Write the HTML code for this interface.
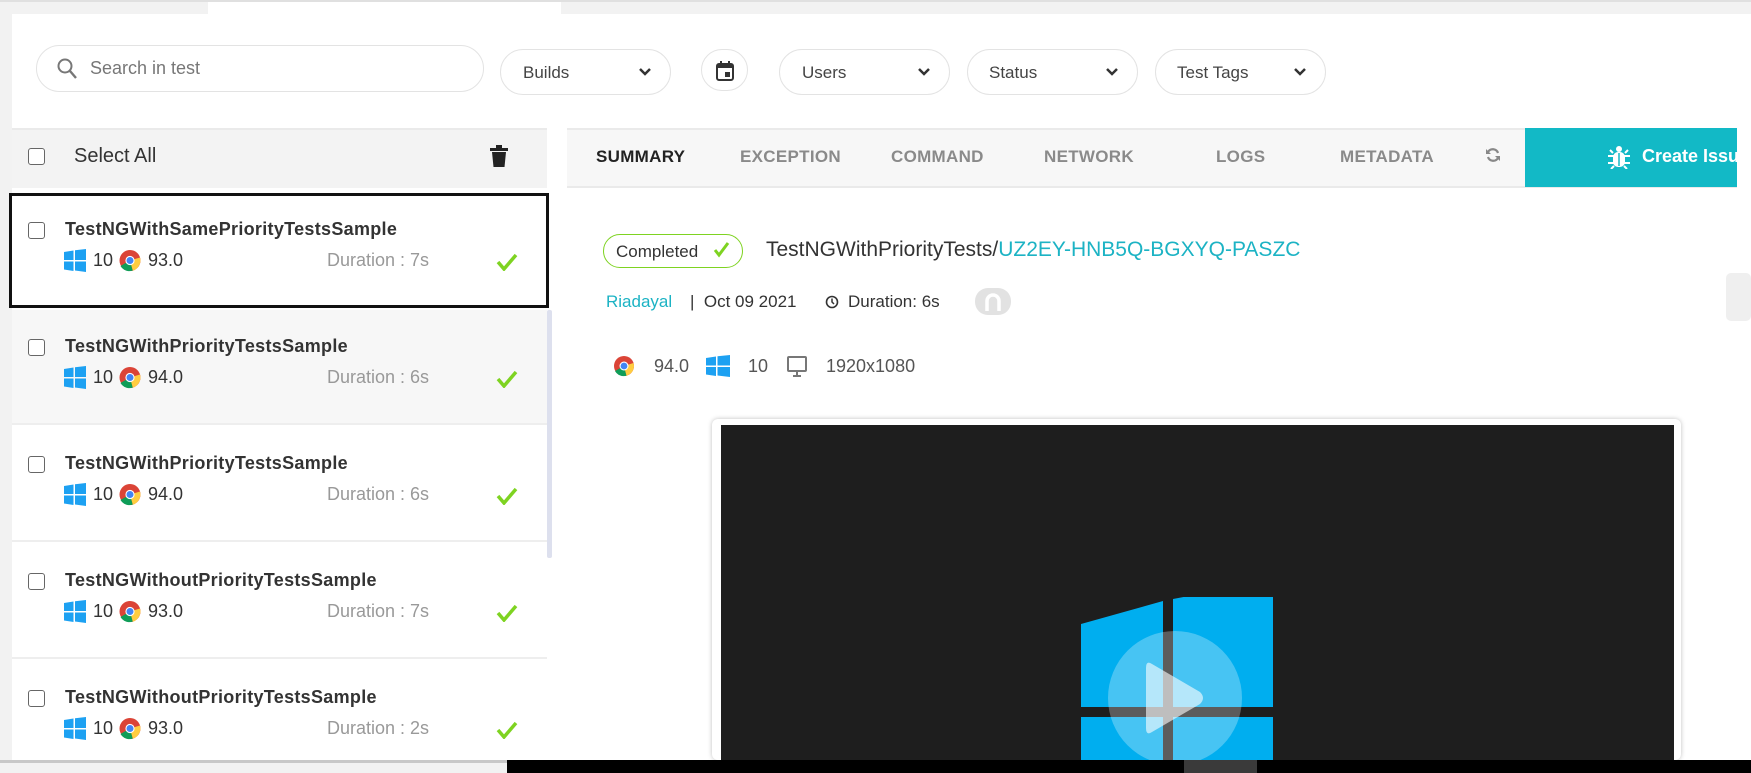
<!DOCTYPE html>
<html><head><meta charset="utf-8"><style>
*{box-sizing:border-box;margin:0;padding:0}
body{width:1751px;height:773px;overflow:hidden;background:#fff;font-family:"Liberation Sans",sans-serif;position:relative;color:#333}
.a{position:absolute}
.pill{position:absolute;border:1px solid #e3e3e3;border-radius:24px;background:#fff;font-size:17px;color:#444}
.chev{position:absolute;right:18px;top:15px}
.tab{position:absolute;top:147px;font-size:17px;font-weight:bold;color:#8a8a8a;letter-spacing:.3px}
.cb{position:absolute;width:17px;height:17px;border:1.5px solid #666;border-radius:3px;background:#fff}
.item{position:absolute;left:12px;width:535px;height:115px;border-bottom:2px solid #eee}
.ttl{position:absolute;left:53px;font-size:18px;font-weight:bold;color:#333;letter-spacing:.3px}
.dur{position:absolute;font-size:17px;color:#999}
</style></head><body>
<div class="a" style="left:0;top:0;width:1751px;height:14px;background:#f2f2f2;border-top:2px solid #e0e0e0"></div>
<div class="a" style="left:208px;top:2px;width:353px;height:12px;background:#fff"></div>
<div class="a" style="left:0;top:14px;width:12px;height:746px;background:#f2f2f2"></div>

<div class="pill" style="left:36px;top:45px;width:448px;height:47px">
<svg class="a" style="left:20px;top:12px" width="20" height="22" viewBox="0 0 20 22"><circle cx="8" cy="8" r="6.5" fill="none" stroke="#777" stroke-width="2"/><path d="M13 13l6 7" stroke="#777" stroke-width="2.4"/></svg>
<span class="a" style="left:53px;top:12px;color:#777;font-size:18px">Search in test</span></div>
<div class="pill" style="left:500px;top:49px;width:171px;height:46px"><span class="a" style="left:22px;top:13px">Builds</span><svg class="chev" width="14" height="14"><path d="M2 4l5 5 5-5" fill="none" stroke="#333" stroke-width="2.5"/></svg></div>
<div class="pill" style="left:701px;top:49px;width:47px;height:42px"><svg class="a" style="left:14px;top:11px" width="18" height="20"><rect x="1" y="3" width="16" height="16" rx="2" fill="none" stroke="#333" stroke-width="2"/><rect x="1" y="3" width="16" height="4" fill="#333"/><rect x="4" y="0" width="2" height="4" fill="#333"/><rect x="12" y="0" width="2" height="4" fill="#333"/><rect x="9" y="11" width="5" height="5" fill="#333"/></svg></div>
<div class="pill" style="left:779px;top:49px;width:171px;height:46px"><span class="a" style="left:22px;top:13px">Users</span><svg class="chev" width="14" height="14"><path d="M2 4l5 5 5-5" fill="none" stroke="#333" stroke-width="2.5"/></svg></div>
<div class="pill" style="left:967px;top:49px;width:171px;height:46px"><span class="a" style="left:21px;top:13px">Status</span><svg class="chev" width="14" height="14"><path d="M2 4l5 5 5-5" fill="none" stroke="#333" stroke-width="2.5"/></svg></div>
<div class="pill" style="left:1155px;top:49px;width:171px;height:46px"><span class="a" style="left:21px;top:13px">Test Tags</span><svg class="chev" width="14" height="14"><path d="M2 4l5 5 5-5" fill="none" stroke="#333" stroke-width="2.5"/></svg></div>

<div class="a" style="left:12px;top:128px;width:535px;height:60px;background:#f3f3f3;border-top:2px solid #eaeaea"></div>
<div class="a" style="left:547px;top:128px;width:20px;height:632px;background:#fff"></div>
<div class="a" style="left:567px;top:128px;width:1184px;height:60px;background:#f7f7f7;border-top:2px solid #eaeaea;border-bottom:2px solid #eaeaea"></div>
<div class="cb" style="left:28px;top:148px"></div>
<div class="a" style="left:74px;top:145px;font-size:20px;color:#333">Select All</div>
<svg class="a" style="left:490px;top:145px" width="18" height="22"><rect x="0" y="3" width="18" height="3" fill="#222"/><rect x="6" y="0" width="6" height="3" fill="#222"/><path d="M2 7h14l-1.5 15h-11z" fill="#222"/></svg>

<div class="tab" style="left:596px;color:#222">SUMMARY</div>
<div class="tab" style="left:740px">EXCEPTION</div>
<div class="tab" style="left:891px">COMMAND</div>
<div class="tab" style="left:1044px">NETWORK</div>
<div class="tab" style="left:1216px">LOGS</div>
<div class="tab" style="left:1340px">METADATA</div>
<svg class="a" style="left:1485px;top:147px" width="16" height="16" viewBox="0 0 16 16"><path d="M13 6A5.5 5.5 0 0 0 3 5M3 10a5.5 5.5 0 0 0 10 1" fill="none" stroke="#888" stroke-width="2.2"/><path d="M1 2v5h5zM15 14V9h-5z" fill="#888"/></svg>
<div class="a" style="left:1525px;top:128px;width:212px;height:59px;background:#12b9c6"></div>
<div class="a" style="left:1737px;top:128px;width:14px;height:60px;background:#fff"></div>
<svg class="a" style="left:1608px;top:145px" width="22" height="24" viewBox="0 0 22 24"><circle cx="11" cy="4" r="3" fill="#fff"/><rect x="5" y="7" width="12" height="15" rx="5" fill="#fff"/><path d="M0 11h22M0 18h22M2 5l3 3M20 5l-3 3M3 24l3-3M19 24l-3-3" stroke="#fff" stroke-width="2"/><path d="M11 8v13" stroke="#12b9c6" stroke-width="1.5"/></svg>
<div class="a" style="left:1642px;top:146px;font-size:18px;font-weight:bold;color:#fff;white-space:nowrap;width:95px;overflow:hidden">Create Issue</div>

<div class="item" style="top:193px;background:#fff"></div>
<div class="a" style="left:9px;top:193px;width:540px;height:115px;border:3px solid #111"></div>
<div class="item" style="top:310px;background:#f7f7f7"></div>
<div class="item" style="top:427px;background:#fff"></div>
<div class="item" style="top:544px;background:#fff"></div>
<div class="item" style="top:661px;background:#fff;height:99px;border:none"></div>
<div class="a" style="left:547px;top:310px;width:5px;height:248px;background:#dde0ee;border-radius:2px"></div>

<div id="items"></div>

<div class="a" style="left:603px;top:234px;width:140px;height:34px;border:1.5px solid #7ed321;border-radius:17px"></div>
<div class="a" style="left:616px;top:242px;font-size:17px;color:#333">Completed</div>
<svg class="a" style="left:713px;top:241px" width="17" height="17"><path d="M2 9l4 5 9-12" fill="none" stroke="#7ed321" stroke-width="3"/></svg>
<div class="a" style="left:766px;top:238px;font-size:21px;color:#333">TestNGWithPriorityTests/<span style="color:#1cb3c4">UZ2EY-HNB5Q-BGXYQ-PASZC</span></div>
<div class="a" style="left:606px;top:292px;font-size:17px;color:#1cb3c4">Riadayal</div>
<div class="a" style="left:690px;top:292px;font-size:17px;color:#333">| &nbsp;Oct 09 2021</div>
<svg class="a" style="left:825px;top:295px" width="14" height="14"><circle cx="7" cy="7" r="5.5" fill="none" stroke="#333" stroke-width="1.6"/><path d="M7 3.5V7l2 2" stroke="#333" stroke-width="1.5" fill="none"/></svg>
<div class="a" style="left:848px;top:292px;font-size:17px;color:#333">Duration: 6s</div>
<div class="a" style="left:975px;top:288px;width:36px;height:27px;background:#e2e2e2;border-radius:13px"></div>
<svg class="a" style="left:983px;top:291px" width="20" height="22"><path d="M4 20V10a6 6 0 0 1 12 0v10" fill="none" stroke="#fff" stroke-width="3.5"/></svg>
<div class="a" style="left:1726px;top:273px;width:25px;height:48px;background:#efefef;border-radius:5px"></div>

<svg class="a" style="left:613px;top:355px" width="22" height="22" viewBox="0 0 22 22"><circle cx="11" cy="11" r="10" fill="#db4437"/><path d="M11 11L2 16A10 10 0 0 0 13.5 20.7z" fill="#0f9d58"/><path d="M11 11l9.5-3A10 10 0 0 1 13.5 20.7z" fill="#ffcd40"/><circle cx="11" cy="11" r="4.5" fill="#fff"/><circle cx="11" cy="11" r="3.4" fill="#4285f4"/></svg>
<div class="a" style="left:654px;top:356px;font-size:18px;color:#555">94.0</div>
<svg class="a" style="left:706px;top:355px" width="24" height="22"><path d="M0 3l10-1.5v9H0zM11.5 1.3L24 0v10.5H11.5zM0 12h10v9L0 19.5zM11.5 12H24v10l-12.5-1.5z" fill="#1da1f2"/></svg>
<div class="a" style="left:748px;top:356px;font-size:18px;color:#555">10</div>
<svg class="a" style="left:786px;top:356px" width="22" height="22"><rect x="2" y="1" width="18" height="14" rx="1" fill="none" stroke="#777" stroke-width="2"/><path d="M7 20h8M11 15v5" stroke="#777" stroke-width="2"/></svg>
<div class="a" style="left:826px;top:356px;font-size:18px;color:#555">1920x1080</div>

<div class="a" style="left:712px;top:419px;width:969px;height:341px;background:#fff;border-radius:6px;box-shadow:0 0 5px rgba(0,0,0,.25)"></div>
<div class="a" style="left:721px;top:425px;width:953px;height:335px;background:#1e1e1e;overflow:hidden">
<svg class="a" style="left:360px;top:172px" width="192" height="170"><path d="M0 27L82 4V110H0zM92 2L192 -17V110H92zM0 120H82V170H0zM92 120H192V170H92z" fill="#00aeef"/></svg>
<div class="a" style="left:387px;top:206px;width:134px;height:134px;border-radius:50%;background:rgba(255,255,255,.28)"></div>
<svg class="a" style="left:425px;top:235px" width="60" height="76"><path d="M6 4Q0 0 0 8V68Q0 76 6 72L54 44Q60 38 54 32z" fill="rgba(255,255,255,.6)"/></svg>
</div>
<div class="a" style="left:0;top:760px;width:507px;height:13px;background:#f2f2f2;border-top:3px solid #c8c8c8"></div>
<div class="a" style="left:507px;top:760px;width:1244px;height:13px;background:#000"></div>
<div class="a" style="left:1184px;top:760px;width:73px;height:13px;background:#3a3a3a"></div>

<script>
var d=[["TestNGWithSamePriorityTestsSample","93.0","7s",193],["TestNGWithPriorityTestsSample","94.0","6s",310],["TestNGWithPriorityTestsSample","94.0","6s",427],["TestNGWithoutPriorityTestsSample","93.0","7s",544],["TestNGWithoutPriorityTestsSample","93.0","2s",661]];
var h="";d.forEach(function(r){var t=r[3];
h+='<div class="cb" style="left:28px;top:'+(t+29)+'px"></div>';
h+='<div class="ttl" style="left:65px;top:'+(t+26)+'px">'+r[0]+'</div>';
h+='<svg class="a" style="left:64px;top:'+(t+56)+'px" width="22" height="23"><path d="M0 3l9.5-1.5v9.5H0zM11 1.3L22 0v11H11zM0 12.5h9.5v9.5L0 20.5zM11 12.5h11V23l-11-1.5z" fill="#1da1f2"/></svg>';
h+='<div class="a" style="left:93px;top:'+(t+57)+'px;font-size:18px;color:#333">10</div>';
h+='<svg class="a" style="left:119px;top:'+(t+56)+'px" width="22" height="23" viewBox="0 0 22 22"><circle cx="11" cy="11" r="10.5" fill="#db4437"/><path d="M11 11L1.5 16.5A10.5 10.5 0 0 0 13.8 21.1z" fill="#0f9d58"/><path d="M11 11l10-3A10.5 10.5 0 0 1 13.8 21.1z" fill="#ffcd40"/><circle cx="11" cy="11" r="4.6" fill="#fff"/><circle cx="11" cy="11" r="3.5" fill="#4285f4"/></svg>';
h+='<div class="a" style="left:148px;top:'+(t+57)+'px;font-size:18px;color:#333">'+r[1]+'</div>';
h+='<div class="dur" style="left:327px;top:'+(t+57)+'px;font-size:18px">Duration : '+r[2]+'</div>';
h+='<svg class="a" style="left:496px;top:'+(t+60)+'px" width="22" height="18"><path d="M2 9l6 7L20 2" fill="none" stroke="#7ed321" stroke-width="3.5"/></svg>';
});document.getElementById("items").innerHTML=h;
</script>
</body></html>
